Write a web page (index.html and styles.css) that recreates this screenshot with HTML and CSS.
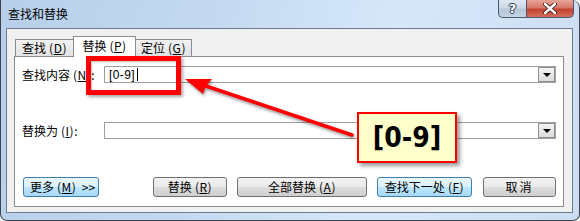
FILE: index.html
```html
<!DOCTYPE html>
<html>
<head>
<meta charset="utf-8">
<link rel="stylesheet" href="styles.css">
</head>
<body>
<div class="window">
  <div class="titlebar">
    <span class="title">查找和替换</span>
    <div class="caption-btns">
      <div class="cap help">?</div>
      <div class="cap close">
        <svg width="14" height="11" viewBox="0 0 14 11"><path d="M2 1 L12 10 M12 1 L2 10" stroke="#3b1a14" stroke-width="4.2" stroke-linecap="round"/><path d="M2 1 L12 10 M12 1 L2 10" stroke="#ffffff" stroke-width="2.4" stroke-linecap="round"/></svg>
      </div>
    </div>
  </div>
  <div class="client">
    <div class="tabs">
      <div class="tab t1">查找<span class="key">(<u>D</u>)</span></div>
      <div class="tab active">替换<span class="key">(<u>P</u>)</span></div>
      <div class="tab t3">定位<span class="key">(<u>G</u>)</span></div>
    </div>
    <div class="panel">
      <div class="row r1">
        <span class="lbl">查找内容<span class="key">(<u>N</u>)</span>:</span>
        <div class="combo"><span class="val">[0-9]</span><span class="caret"></span><div class="drop"><span class="tri"></span></div></div>
      </div>
      <div class="row r2">
        <span class="lbl">替换为<span class="key">(<u>I</u>)</span>:</span>
        <div class="combo"><div class="drop"><span class="tri"></span></div></div>
      </div>
      <div class="buttons">
        <div class="btn hot b-more">更多<span class="key">(<u>M</u>)</span>&nbsp;&nbsp;&gt;&gt;</div>
        <div class="btn b-rep">替换<span class="key">(<u>R</u>)</span></div>
        <div class="btn b-all">全部替换<span class="key">(<u>A</u>)</span></div>
        <div class="btn hot b-next">查找下一处<span class="key">(<u>F</u>)</span></div>
        <div class="btn b-cancel">取消</div>
      </div>
    </div>
  </div>

  <div class="hl-box"></div>
  <svg class="arrow" width="580" height="221" viewBox="0 0 580 221">
    <line x1="352" y1="135" x2="200" y2="84" stroke="#ff0000" stroke-width="3.5" stroke-linecap="round"/>
    <polygon points="185,79 212,79 206,86 203,94" fill="#ff0000"/>
  </svg>
  <div class="callout">[0-9]</div>
</div>
</body>
</html>
```

FILE: styles.css
```css
html, body {
  margin: 0;
  padding: 0;
}
body {
  width: 580px;
  height: 221px;
  overflow: hidden;
  font-family: "Noto Sans CJK SC", "Liberation Sans", sans-serif;
  font-size: 12px;
  color: #000;
  background: #ffffff;
}
u { text-decoration: underline; text-underline-offset: 1px; }
.key {
  margin-left: 3px;
  letter-spacing: 0.5px;
}

.window {
  position: relative;
  width: 580px;
  height: 221px;
  box-sizing: border-box;
  border: 1px solid #3d4450;
  border-top: none;
  border-radius: 0 8px 7px 7px;
  background: linear-gradient(100deg, #b7cfea 0%, #c4d9f1 35%, #d6e7f9 65%, #cbdef4 100%);
  display: flex;
  flex-direction: column;
}

.titlebar {
  height: 28px;
  flex: none;
  display: flex;
  align-items: flex-start;
  justify-content: space-between;
}
.title {
  margin: 6px 0 0 7px;
  font-size: 12px;
  line-height: 16px;
  color: #000;
}
.caption-btns {
  display: flex;
  margin-right: 5px;
}
.cap {
  height: 18px;
  box-sizing: border-box;
  border: 1px solid #4a5870;
  border-top: none;
  display: flex;
  align-items: center;
  justify-content: center;
}
.help {
  width: 28px;
  border-right: none;
  border-radius: 0 0 0 5px;
  background: linear-gradient(#dfe8f2 0%, #cbd7e5 48%, #b6c6d8 52%, #c5d3e2 100%);
  color: #fff;
  font-family: "DejaVu Sans", sans-serif;
  font-weight: bold;
  font-size: 13px;
  text-shadow: 0 0 1px #2d3c52, 1px 0 0 #2d3c52, -1px 0 0 #2d3c52, 0 1px 0 #2d3c52, 0 -1px 0 #2d3c52;
}
.close {
  width: 48px;
  border-radius: 0 0 5px 0;
  background: linear-gradient(#e6a597 0%, #d9766a 45%, #c4412f 55%, #d2705c 100%);
}

.client {
  flex: 1;
  margin: 0 6px 7px 5px;
  border: 1px solid #6d7b8d;
  background: #f0f0f0;
  padding: 7px 8px 5px 7px;
  display: flex;
  flex-direction: column;
}

.tabs {
  height: 20px;
  display: flex;
  align-items: flex-end;
  padding-left: 1px;
  position: relative;
  z-index: 2;
}
.tab {
  box-sizing: border-box;
  height: 17px;
  border: 1px solid #898c95;
  border-bottom: none;
  background: linear-gradient(#f2f2f2, #e3e3e3);
  display: flex;
  align-items: center;
  justify-content: center;
  line-height: 14px;
}
.t1 { width: 58px; border-right: none; }
.t3 { width: 56px; border-left: none; }
.tab.active {
  width: 63px;
  height: 21px;
  margin-bottom: -1px;
  background: #ffffff;
  padding-bottom: 2px;
}

.panel {
  flex: 1;
  border: 1px solid #898c95;
  background: #ffffff;
  padding: 9px 7px 0 7px;
  display: flex;
  flex-direction: column;
}

.row {
  display: flex;
  align-items: center;
  height: 17px;
}
.r2 { margin-top: 39px; }
.lbl {
  width: 82px;
  flex: none;
  line-height: 14px;
}
.combo {
  flex: 1;
  height: 17px;
  box-sizing: border-box;
  border: 1px solid #a0a0a0;
  background: #fff;
  display: flex;
  align-items: center;
  position: relative;
}
.val {
  font-family: "Liberation Sans", sans-serif;
  font-size: 12px;
  margin-left: 4px;
  line-height: 14px;
  letter-spacing: 0.4px;
}
.caret {
  width: 1px;
  height: 13px;
  background: #000;
  margin-left: 2px;
}
.drop {
  margin-left: auto;
  width: 17px;
  height: 15px;
  box-sizing: border-box;
  border: 1px solid #8e8e8e;
  background: linear-gradient(#f4f4f4, #dcdcdc);
  display: flex;
  align-items: flex-end;
  justify-content: center;
  padding-bottom: 4px;
}
.tri {
  width: 0;
  height: 0;
  border-left: 4px solid transparent;
  border-right: 4px solid transparent;
  border-top: 4px solid #000;
}

.buttons {
  display: flex;
  margin-top: 38px;
  padding-left: 1px;
}
.btn {
  height: 20px;
  box-sizing: border-box;
  border: 1px solid #707070;
  border-radius: 3px;
  background: linear-gradient(#f2f2f2 0%, #ebebeb 48%, #dddddd 52%, #cfcfcf 100%);
  display: flex;
  align-items: center;
  justify-content: center;
  line-height: 14px;
  white-space: nowrap;
}
.btn.hot {
  border-color: #3c7fb1;
  background: linear-gradient(#eaf6fd 0%, #d9f0fc 48%, #bee6fd 52%, #a7d9f5 100%);
}
.b-more { width: 76px; justify-content: flex-start; padding-left: 6px; }
.b-rep { width: 74px; margin-left: 54px; }
.b-all { width: 130px; margin-left: 10px; }
.b-next { width: 95px; margin-left: 10px; }
.b-cancel { width: 73px; margin-left: 11px; letter-spacing: 2px; }

/* annotations overlaid on the dialog */
.hl-box {
  position: absolute;
  left: 85px;
  top: 56px;
  width: 95px;
  height: 39px;
  box-sizing: border-box;
  border: 5px solid #ff0000;
  box-shadow: 2px 2px 3px rgba(0,0,0,0.35), inset 1px 1px 2px rgba(0,0,0,0.25);
  z-index: 5;
}
.arrow {
  position: absolute;
  left: -1px;
  top: 0;
  z-index: 5;
  filter: drop-shadow(1px 2px 1.5px rgba(0,0,0,0.4));
}
.callout {
  position: absolute;
  left: 356px;
  top: 112px;
  width: 100px;
  height: 51px;
  box-sizing: border-box;
  border: 2px solid #ff0000;
  background: #ffffcc;
  box-shadow: 3px 3px 4px rgba(0,0,0,0.4);
  display: flex;
  align-items: center;
  justify-content: center;
  font-family: "DejaVu Sans", sans-serif;
  font-stretch: condensed;
  font-weight: bold;
  font-size: 28px;
  color: #000;
  z-index: 6;
}
```
